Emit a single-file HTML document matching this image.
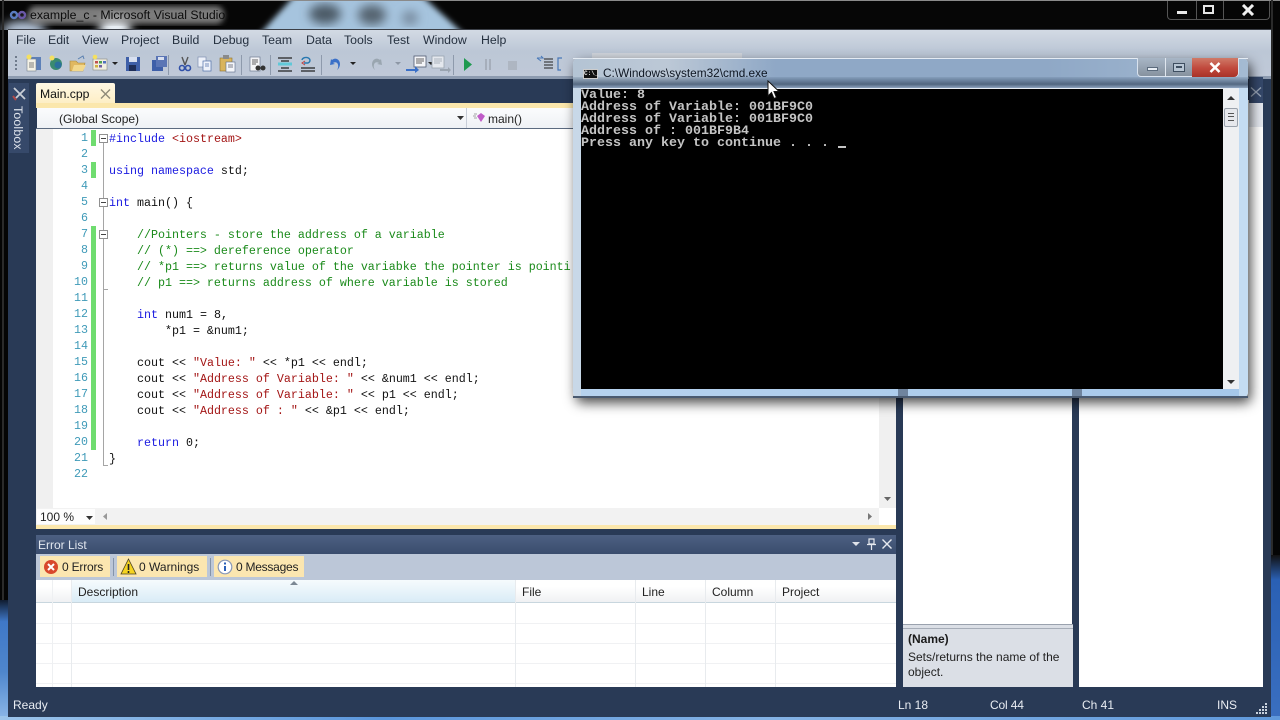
<!DOCTYPE html>
<html><head><meta charset="utf-8"><style>
html,body{margin:0;padding:0;background:#000;}
#r{position:relative;width:1280px;height:720px;overflow:hidden;background:#050505;font-family:"Liberation Sans",sans-serif;font-size:12px;color:#1a1a1a;}
#r div,#r span.a,#r svg{position:absolute;}
.t{position:absolute;white-space:pre;}
.c{position:absolute;left:109px;white-space:pre;font-family:"Liberation Mono",monospace;font-size:11.67px;line-height:16px;height:16px;color:#111;}
.n{position:absolute;width:30px;left:58px;text-align:right;font-family:"Liberation Mono",monospace;font-size:11.67px;line-height:16px;color:#3f9ab8;}
.k{color:#1a1ae0}.s{color:#a31515}.g{color:#1a8a1a}
.m{position:absolute;white-space:pre;top:33px;font-size:12.3px;color:#25303f;}
.h{position:absolute;white-space:pre;top:585px;font-size:12px;color:#222;}
.cm{position:absolute;left:581px;white-space:pre;font-family:"Liberation Mono",monospace;font-weight:bold;font-size:13.33px;line-height:12px;height:12px;color:#c4c4c4;}
.w{position:absolute;white-space:pre;top:698px;font-size:12px;color:#e8ecf2;}
</style></head><body><div id="r">

<!-- desktop / title bar -->
<div style="left:0;top:0;width:1280px;height:30px;background:#060606"></div>
<svg style="left:0;top:0" width="520" height="30" viewBox="0 0 520 30">
<defs><filter id="b1"><feGaussianBlur stdDeviation="5"/></filter><filter id="b2"><feGaussianBlur stdDeviation="3"/></filter><filter id="b3"><feGaussianBlur stdDeviation="5"/></filter></defs>
<g filter="url(#b1)"><ellipse cx="24" cy="30" rx="22" ry="9" fill="#b8c8dc"/><ellipse cx="115" cy="28" rx="16" ry="14" fill="#e8eef4"/></g>
<path d="M258 36L296 -6H420L466 36z" fill="#a6c4de" filter="url(#b2)"/>
<g filter="url(#b3)"><ellipse cx="325" cy="14" rx="16" ry="10" fill="#4c5a66"/><ellipse cx="372" cy="15" rx="14" ry="10" fill="#54646f"/><ellipse cx="410" cy="18" rx="8" ry="7" fill="#76899c"/></g>
<rect x="28" y="6" width="196" height="18" rx="8" fill="#9a9a9a" opacity=".8" filter="url(#b2)"/>
</svg>
<div style="left:0;top:0;width:1280px;height:1px;background:#8a8a8a"></div>
<div style="left:1271px;top:0;width:2px;height:720px;background:#2b2b2b"></div>
<div style="left:2px;top:0;width:2px;height:720px;background:#2b2b2b"></div>
<!-- blue frame glow bottom -->
<div style="left:0;top:600px;width:8px;height:120px;background:linear-gradient(#101c30,#3f78c8 18%,#4f86cc 60%,#8db8e8)"></div>
<div style="left:1271px;top:555px;width:9px;height:165px;background:linear-gradient(#111,#2a60b4 15%,#3a6fc0)"></div>
<div style="left:0;top:716px;width:1280px;height:4px;background:linear-gradient(90deg,#9cc4ea,#5a96dc 30%,#84b2e4 60%,#5f99dc)"></div>

<svg style="left:9px;top:9px" width="18" height="12" viewBox="0 0 18 12"><circle cx="5" cy="6" r="3" fill="none" stroke="#5a7cc0" stroke-width="2.400"/><circle cx="13" cy="6" r="3" fill="none" stroke="#6a58a8" stroke-width="2.400"/></svg>
<span class="t" style="left:30px;top:8px;font-size:12.3px;color:#0c0c0c">example_c - Microsoft Visual Studio</span>

<!-- top window buttons -->
<div style="left:1167px;top:1px;width:103px;height:19px;border:1px solid #555;border-top:0;border-radius:0 0 4px 4px;box-sizing:border-box"></div>
<div style="left:1196px;top:1px;width:1px;height:19px;background:#555"></div>
<div style="left:1223px;top:1px;width:1px;height:19px;background:#555"></div>
<div style="left:1177px;top:11px;width:10px;height:3px;background:#e8e8e8"></div>
<div style="left:1203px;top:5px;width:11px;height:9px;border:2px solid #e6e6e6;box-sizing:border-box"></div>
<svg style="left:1241px;top:4px" width="14" height="12" viewBox="0 0 14 12"><path d="M2 1L12 11M12 1L2 11" stroke="#f0f0f0" stroke-width="3"/></svg>

<!-- VS body -->
<div style="left:8px;top:29px;width:1263px;height:688px;background:#293a56"></div>
<div style="left:8px;top:30px;width:1263px;height:47px;background:linear-gradient(#d3dae4,#bcc7d6 45%,#c0c9d8 100%)"></div>
<div style="left:8px;top:29px;width:1263px;height:1px;background:#3b3f47"></div>
<div style="left:8px;top:76px;width:1263px;height:3px;background:#8d9bb0"></div>

<!-- Menu -->
<span class="m" style="left:16px">File</span>
<span class="m" style="left:48px">Edit</span>
<span class="m" style="left:82px">View</span>
<span class="m" style="left:121px">Project</span>
<span class="m" style="left:172px">Build</span>
<span class="m" style="left:213px">Debug</span>
<span class="m" style="left:262px">Team</span>
<span class="m" style="left:306px">Data</span>
<span class="m" style="left:344px">Tools</span>
<span class="m" style="left:387px">Test</span>
<span class="m" style="left:423px">Window</span>
<span class="m" style="left:481px">Help</span>

<!-- Toolbar icons -->
<svg style="left:10px;top:50px" width="560" height="28" viewBox="0 0 560 28">
<g fill="#6f7b8c"><rect x="5" y="6" width="2" height="2"/><rect x="5" y="10" width="2" height="2"/><rect x="5" y="14" width="2" height="2"/><rect x="5" y="18" width="2" height="2"/></g>
<rect x="20" y="7" width="11" height="13" fill="#5d80b8"/><rect x="17" y="9" width="9" height="12" fill="#f4f2e6" stroke="#77828f" stroke-width=".6"/><path d="M19 13h5M19 15h5M19 17h5" stroke="#555" stroke-width=".8"/><circle cx="19" cy="7" r="2.500" fill="#f4e060"/>
<circle cx="46" cy="14" r="6" fill="#3a8a70"/><circle cx="48" cy="15" r="3.500" fill="#2a6f9c"/><circle cx="42" cy="8" r="2.500" fill="#f4e060"/>
<path d="M60 21V11h6l2 2h7l-2 8z" fill="#e0b860" stroke="#a98a3c" stroke-width=".6"/><path d="M62 21l2-6h12l-3 6z" fill="#f2d88c"/><path d="M68 9l5-3 1 3" stroke="#5a80b0" fill="none"/>
<rect x="83" y="9" width="14" height="11" fill="#f0eee0" stroke="#8a8a80" stroke-width=".6"/><rect x="85" y="11" width="3" height="2.500" fill="#c05050"/><rect x="89" y="11" width="3" height="2.500" fill="#50a050"/><rect x="93" y="11" width="3" height="2.500" fill="#5070c0"/><rect x="85" y="15" width="3" height="2.500" fill="#d0b040"/><rect x="89" y="15" width="3" height="2.500" fill="#7060a0"/><circle cx="85" cy="7" r="2.300" fill="#f4e060"/>
<path d="M102 12h6l-3 3z" fill="#222"/>
<rect x="116" y="7" width="14" height="14" fill="#3e5fa8"/><rect x="119" y="7" width="8" height="5" fill="#d8e0f0"/><rect x="119" y="15" width="7" height="6" fill="#1e2e58"/>
<rect x="142" y="10" width="11" height="11" fill="#3e5fa8"/><rect x="146" y="6" width="11" height="11" fill="#5a75b5"/><rect x="148" y="7" width="6" height="3" fill="#d8e0f0"/>
<rect x="158" y="5" width="1" height="20" fill="#8e9aac"/>
<path d="M172 7l3 8M178 7l-3 8" stroke="#555" stroke-width="1.400"/><circle cx="172" cy="18" r="2.500" fill="none" stroke="#3050a8" stroke-width="1.600"/><circle cx="178" cy="18" r="2.500" fill="none" stroke="#3050a8" stroke-width="1.600"/>
<rect x="188" y="7" width="8" height="10" fill="#eef2fa" stroke="#7f8fb0" stroke-width=".7"/><rect x="193" y="11" width="8" height="10" fill="#eef2fa" stroke="#4f6fa8" stroke-width=".7"/><path d="M195 14h4M195 16h4" stroke="#4f6fa8" stroke-width=".7"/>
<rect x="210" y="8" width="12" height="13" fill="#d9b45c" stroke="#8c7030" stroke-width=".6"/><rect x="213" y="5" width="6" height="4" fill="#8a8a8a"/><rect x="216" y="12" width="9" height="10" fill="#f4f6fa" stroke="#5a6a88" stroke-width=".6"/><path d="M218 15h5M218 17h5" stroke="#556" stroke-width=".7"/>
<rect x="231" y="5" width="1" height="20" fill="#8e9aac"/>
<rect x="240" y="7" width="10" height="14" fill="#f4f5f8" stroke="#6e7a90" stroke-width=".7"/><path d="M242 10h6M242 12h6M242 14h4" stroke="#333" stroke-width=".7"/><circle cx="248" cy="18" r="2.500" fill="#333"/><circle cx="253" cy="18" r="2.500" fill="#333"/>
<rect x="260" y="5" width="1" height="20" fill="#8e9aac"/>
<path d="M268 8h14M271 11h8" stroke="#222" stroke-width="1.200"/><rect x="268" y="12.500" width="14" height="3" fill="#60c8d8"/><path d="M271 18h8M268 21h14" stroke="#222" stroke-width="1.200"/>
<path d="M292 10a4 3 0 1 1 6 3h-4" fill="none" stroke="#2878b0" stroke-width="1.400"/><path d="M295 15l-3-2 3-2" fill="none" stroke="#c04040" stroke-width="1"/><path d="M291 18h14M291 21h14" stroke="#222" stroke-width="1.300"/>
<rect x="311" y="5" width="1" height="20" fill="#8e9aac"/>
<path d="M321 9l-1 6 5-1-2-1c3-2 6 0 5 5l-1 2c4-3 4-9 0-11-2-1-4 0-5 1z" fill="#3a70c8"/>
<path d="M340 12h6l-3 3z" fill="#222"/>
<path d="M371 9l1 6-5-1 2-1c-3-2-6 0-5 5l1 2c-4-3-4-9 0-11 2-1 4 0 5 1z" fill="#9aa6b0"/>
<path d="M385 12h6l-3 3z" fill="#8d97a5"/>
<rect x="404" y="6" width="12" height="11" fill="#f4f5f8" stroke="#505a70" stroke-width=".8"/><path d="M406 9h8M406 11h8M406 13h6" stroke="#333" stroke-width=".8"/><path d="M396 19h9v-3l4 4-4 3v-2h-9z" fill="#3a70c8"/>
<path d="M418 12h6l-3 3z" fill="#222"/>
<rect x="422" y="6" width="12" height="12" fill="#e4e8ee" stroke="#9aa4b0" stroke-width=".8"/><path d="M424 9h8M424 11h8M424 13h6" stroke="#9aa4b0" stroke-width=".8"/><path d="M430 19h8v-2l3 3-3 3v-2h-8z" fill="#9aa4b0"/>
<rect x="443" y="5" width="1" height="20" fill="#8e9aac"/>
<path d="M454 8l8 6.500-8 6.500z" fill="#1f9a50"/>
<path d="M476 9v11M480 9v11" stroke="#a6aebb" stroke-width="2"/>
<rect x="498" y="11" width="9" height="9" fill="#aeb6c2"/>
<path d="M527 8h6l-2-2M527 8l4 3" fill="none" stroke="#4878b8" stroke-width="1"/>
<path d="M534 9h9M534 12h9M534 15h9M534 18h9" stroke="#222" stroke-width="1"/>
<path d="M552 8h-4v12h3" fill="none" stroke="#4878b8" stroke-width="1.200"/>
</svg>
<div style="left:592px;top:53px;width:150px;height:5px;background:#d0d5dc"></div>

<!-- toolbox tab -->
<div style="left:9px;top:83px;width:20px;height:70px;background:#36496a"></div>
<svg style="left:12px;top:86px" width="15" height="16" viewBox="0 0 15 16"><path d="M2 2l11 11M13 3l-9 9" stroke="#c9ced6" stroke-width="1.800"/><path d="M1 10l3 4" stroke="#b04848" stroke-width="2"/></svg>
<span class="t" style="left:10px;top:106px;font-size:12.300px;color:#dfe4ec;transform-origin:0 0;transform:translate(15px,0) rotate(90deg);letter-spacing:.2px">Toolbox</span>

<!-- doc tab -->
<div style="left:36px;top:83px;width:79px;height:21px;background:linear-gradient(#fff8e4,#fdeec4);border-radius:2px 2px 0 0"></div>
<span class="t" style="left:40px;top:87px;font-size:12.200px;color:#111">Main.cpp</span>
<svg style="left:100px;top:89px" width="11" height="10" viewBox="0 0 11 10"><path d="M1 .5l9 9M10 .5l-9 9" stroke="#8f8a78" stroke-width="1.400"/></svg>
<div style="left:36px;top:103px;width:860px;height:5px;background:#fbe7ac"></div>

<!-- scope bar -->
<div style="left:37px;top:108px;width:859px;height:20px;background:linear-gradient(#fbfcfd,#eef1f5)"></div>
<span class="t" style="left:59px;top:112px;font-size:12px;color:#222">(Global Scope)</span>
<svg style="left:457px;top:116px" width="7" height="5"><path d="M0 0h7l-3.500 4z" fill="#333"/></svg>
<div style="left:466px;top:108px;width:1px;height:20px;background:#c8ced8"></div>
<svg style="left:473px;top:112px" width="13" height="11" viewBox="0 0 13 11"><path d="M1 2h3M0 4h3M1 6h3" stroke="#888" stroke-width=".7"/><path d="M4 4l4-3 4 3-4 6z" fill="#c05cc8"/></svg>
<span class="t" style="left:488px;top:112px;font-size:12px;color:#222">main()</span>
<div style="left:36px;top:128px;width:860px;height:1px;background:#5b6a80"></div>

<!-- editor -->
<div style="left:36px;top:129px;width:860px;height:396px;background:#fff"></div>
<div style="left:36px;top:129px;width:17px;height:379px;background:#f0f0f0"></div>
<div style="left:91px;top:130px;width:5px;height:16px;background:#6fdc6f"></div>
<div style="left:91px;top:162px;width:5px;height:16px;background:#6fdc6f"></div>
<div style="left:91px;top:226px;width:5px;height:224px;background:#6fdc6f"></div>
<div style="left:103px;top:143px;width:1px;height:322px;background:#a5a5a5"></div>
<div style="left:103px;top:465px;width:5px;height:1px;background:#a5a5a5"></div>
<div style="left:103px;top:289px;width:5px;height:1px;background:#a5a5a5"></div>
<div style="left:99px;top:134px;width:9px;height:9px;background:#fff;border:1px solid #909090;box-sizing:border-box"></div><div style="left:101px;top:138px;width:5px;height:1px;background:#444"></div>
<div style="left:99px;top:198px;width:9px;height:9px;background:#fff;border:1px solid #909090;box-sizing:border-box"></div><div style="left:101px;top:202px;width:5px;height:1px;background:#444"></div>
<div style="left:99px;top:230px;width:9px;height:9px;background:#fff;border:1px solid #909090;box-sizing:border-box"></div><div style="left:101px;top:234px;width:5px;height:1px;background:#444"></div>

<span class="n" style="top:130px">1</span><span class="n" style="top:146px">2</span><span class="n" style="top:162px">3</span><span class="n" style="top:178px">4</span><span class="n" style="top:194px">5</span><span class="n" style="top:210px">6</span><span class="n" style="top:226px">7</span><span class="n" style="top:242px">8</span><span class="n" style="top:258px">9</span><span class="n" style="top:274px">10</span><span class="n" style="top:290px">11</span><span class="n" style="top:306px">12</span><span class="n" style="top:322px">13</span><span class="n" style="top:338px">14</span><span class="n" style="top:354px">15</span><span class="n" style="top:370px">16</span><span class="n" style="top:386px">17</span><span class="n" style="top:402px">18</span><span class="n" style="top:418px">19</span><span class="n" style="top:434px">20</span><span class="n" style="top:450px">21</span><span class="n" style="top:466px">22</span>

<span class="c" style="top:131px"><span class="k">#include</span> <span class="s">&lt;iostream&gt;</span></span>
<span class="c" style="top:163px"><span class="k">using namespace</span> std;</span>
<span class="c" style="top:195px"><span class="k">int</span> main() {</span>
<span class="c g" style="top:227px">    //Pointers - store the address of a variable</span>
<span class="c g" style="top:243px">    // (*) ==&gt; dereference operator</span>
<span class="c g" style="top:259px">    // *p1 ==&gt; returns value of the variabke the pointer is pointi</span>
<span class="c g" style="top:275px">    // p1 ==&gt; returns address of where variable is stored</span>
<span class="c" style="top:307px">    <span class="k">int</span> num1 = 8,</span>
<span class="c" style="top:323px">        *p1 = &amp;num1;</span>
<span class="c" style="top:355px">    cout &lt;&lt; <span class="s">"Value: "</span> &lt;&lt; *p1 &lt;&lt; endl;</span>
<span class="c" style="top:371px">    cout &lt;&lt; <span class="s">"Address of Variable: "</span> &lt;&lt; &amp;num1 &lt;&lt; endl;</span>
<span class="c" style="top:387px">    cout &lt;&lt; <span class="s">"Address of Variable: "</span> &lt;&lt; p1 &lt;&lt; endl;</span>
<span class="c" style="top:403px">    cout &lt;&lt; <span class="s">"Address of : "</span> &lt;&lt; &amp;p1 &lt;&lt; endl;</span>
<span class="c" style="top:435px">    <span class="k">return</span> 0;</span>
<span class="c" style="top:451px">}</span>

<!-- editor scrollbars -->
<div style="left:879px;top:129px;width:17px;height:379px;background:#f0f0f0"></div>
<svg style="left:884px;top:497px" width="7" height="5"><path d="M0 0h7l-3.500 4z" fill="#666"/></svg>
<div style="left:36px;top:508px;width:843px;height:17px;background:#f2f2f2"></div>
<div style="left:37px;top:509px;width:58px;height:15px;background:#fdfdfd"></div>
<span class="t" style="left:40px;top:510px;font-size:12px;color:#222">100 %</span>
<svg style="left:86px;top:516px" width="7" height="5"><path d="M0 0h7l-3.500 4z" fill="#333"/></svg>
<svg style="left:102px;top:513px" width="5" height="7"><path d="M5 0v7L1 3.500z" fill="#999"/></svg>
<svg style="left:868px;top:513px" width="5" height="7"><path d="M0 0v7l4-3.500z" fill="#777"/></svg>
<div style="left:36px;top:525px;width:860px;height:4px;background:#fbe7ac"></div>

<!-- Error list -->
<div style="left:36px;top:535px;width:860px;height:19px;background:linear-gradient(#4d6082,#3a4c6d)"></div>
<span class="t" style="left:38px;top:538px;font-size:12px;color:#e2e7ef">Error List</span>
<svg style="left:852px;top:542px" width="9" height="5"><path d="M0 0h8l-4 4z" fill="#dfe3ea"/></svg>
<svg style="left:867px;top:538px" width="9" height="12" viewBox="0 0 9 12"><path d="M2 1h5v5H2zM0 6.500h9M4.500 7v5" fill="none" stroke="#e6e9ef" stroke-width="1.200"/></svg>
<svg style="left:882px;top:539px" width="10" height="10" viewBox="0 0 10 10"><path d="M.5.5l9 9M9.500.5l-9 9" stroke="#e6e9ef" stroke-width="1.400"/></svg>
<div style="left:36px;top:554px;width:860px;height:26px;background:#bcc7d8"></div>
<div style="left:40px;top:556px;width:70px;height:21px;background:#fbe6b0"></div>
<div style="left:117px;top:556px;width:90px;height:21px;background:#fbe6b0"></div>
<div style="left:214px;top:556px;width:90px;height:21px;background:#fbe6b0"></div>
<div style="left:113px;top:558px;width:1px;height:18px;background:#8594aa"></div>
<div style="left:210px;top:558px;width:1px;height:18px;background:#8594aa"></div>
<svg style="left:43px;top:559px" width="16" height="16" viewBox="0 0 16 16"><circle cx="8" cy="8" r="7" fill="#d8482c"/><path d="M5 5l6 6M11 5l-6 6" stroke="#fff" stroke-width="2"/></svg>
<svg style="left:120px;top:558px" width="17" height="17" viewBox="0 0 17 17"><path d="M8.500 1L16 16H1z" fill="#f5d320" stroke="#4a4020" stroke-width=".8"/><path d="M8.500 6v6M8.500 13v2" stroke="#222" stroke-width="1.600"/></svg>
<svg style="left:217px;top:559px" width="16" height="16" viewBox="0 0 16 16"><circle cx="8" cy="8" r="6.800" fill="#fff" stroke="#8898b8" stroke-width="1.200"/><path d="M8 7v5" stroke="#2a60b8" stroke-width="2"/><path d="M8 3.500v2" stroke="#2a60b8" stroke-width="2"/></svg>
<span class="t" style="left:62px;top:560px;font-size:12px;letter-spacing:-.2px;color:#222">0 Errors</span>
<span class="t" style="left:139px;top:560px;font-size:12px;color:#222">0 Warnings</span>
<span class="t" style="left:236px;top:560px;font-size:12px;letter-spacing:-.25px;color:#222">0 Messages</span>

<div style="left:36px;top:580px;width:860px;height:107px;background:#fff"></div>
<div style="left:36px;top:580px;width:860px;height:23px;background:linear-gradient(#fff 30%,#eff0f2)"></div>
<div style="left:72px;top:580px;width:443px;height:23px;background:linear-gradient(#f6fbfd,#d8ebf6)"></div>
<div style="left:36px;top:602px;width:860px;height:1px;background:#c8d6de"></div>
<div style="left:36px;top:623px;width:860px;height:1px;background:#f0f1f3"></div>
<div style="left:36px;top:643px;width:860px;height:1px;background:#f0f1f3"></div>
<div style="left:36px;top:663px;width:860px;height:1px;background:#f0f1f3"></div>
<div style="left:36px;top:683px;width:860px;height:1px;background:#f0f1f3"></div>
<div style="left:52px;top:580px;width:1px;height:107px;background:#eef0f2"></div>
<div style="left:71px;top:580px;width:1px;height:107px;background:#e8ebee"></div>
<div style="left:515px;top:580px;width:1px;height:107px;background:#e8ebee"></div>
<div style="left:635px;top:580px;width:1px;height:107px;background:#e8ebee"></div>
<div style="left:705px;top:580px;width:1px;height:107px;background:#e8ebee"></div>
<div style="left:775px;top:580px;width:1px;height:107px;background:#e8ebee"></div>
<svg style="left:290px;top:581px" width="8" height="5"><path d="M4 0l4 4H0z" fill="#7c8894"/></svg>
<span class="h" style="left:78px">Description</span>
<span class="h" style="left:522px">File</span>
<span class="h" style="left:642px">Line</span>
<span class="h" style="left:712px">Column</span>
<span class="h" style="left:782px">Project</span>

<!-- right panes -->
<div style="left:903px;top:100px;width:169px;height:587px;background:#fff"></div>
<div style="left:1079px;top:100px;width:184px;height:587px;background:#fff"></div>
<div style="left:903px;top:624px;width:170px;height:63px;background:#dbdfe6;border-top:1px solid #9aa2ae;box-sizing:border-box"></div>
<div style="left:903px;top:628px;width:170px;height:1px;background:#a6adb8"></div>
<span class="t" style="left:908px;top:632px;font-size:12px;font-weight:bold;color:#1a1a1a">(Name)</span>
<span class="t" style="left:908px;top:650px;font-size:12px;color:#222">Sets/returns the name of the</span>
<span class="t" style="left:908px;top:665px;font-size:12px;color:#222">object.</span>
<div style="left:1249px;top:77px;width:14px;height:26px;background:#35486a"></div>
<svg style="left:1250px;top:87px" width="12" height="11" viewBox="0 0 12 11"><path d="M1 .5l10 9M11 .5l-10 9" stroke="#9aa6b8" stroke-width="1.300"/></svg>
<div style="left:1249px;top:103px;width:14px;height:24px;background:#e4e8ef"></div>

<!-- status text -->
<span class="w" style="left:13px">Ready</span>
<span class="w" style="left:898px">Ln 18</span>
<span class="w" style="left:990px;letter-spacing:-.15px">Col 44</span>
<span class="w" style="left:1082px">Ch 41</span>
<span class="w" style="left:1217px">INS</span>
<svg style="left:1256px;top:703px" width="12" height="12"><g fill="#c9d2de"><rect x="9" y="0" width="2" height="2"/><rect x="6" y="3" width="2" height="2"/><rect x="9" y="3" width="2" height="2"/><rect x="3" y="6" width="2" height="2"/><rect x="6" y="6" width="2" height="2"/><rect x="9" y="6" width="2" height="2"/><rect x="0" y="9" width="2" height="2"/><rect x="3" y="9" width="2" height="2"/><rect x="6" y="9" width="2" height="2"/><rect x="9" y="9" width="2" height="2"/></g></svg>

<!-- CMD window -->
<div style="left:573px;top:58px;width:675px;height:340px;border-radius:6px;box-shadow:3px 5px 12px rgba(0,0,0,.7);background:linear-gradient(90deg,#c8d8e8,#aac8e8 50%,#c4dcf2)"></div>
<div style="left:573px;top:58px;width:675px;height:30px;border-radius:6px 6px 0 0;background:linear-gradient(90deg,#b4c4d4 0%,#bcc8d6 14%,#8fa8c6 30%,#8fa8c6 70%,#a4bad2 100%)"></div>
<div style="left:573px;top:77px;width:675px;height:11px;background:linear-gradient(rgba(90,115,145,.2),rgba(70,90,115,.85) 65%,#8fa5c0)"></div>
<div style="left:573px;top:58px;width:675px;height:1px;background:#e4ebf3"></div>
<div style="left:581px;top:88px;width:658px;height:1px;background:#e8eef5"></div>
<div style="left:581px;top:89px;width:642px;height:300px;background:#000"></div>
<div style="left:581px;top:389px;width:658px;height:9px;background:linear-gradient(90deg,#b6d2ee,#a6c8ea)"></div>
<div style="left:898px;top:389px;width:10px;height:9px;background:#6f849e"></div>
<div style="left:1072px;top:389px;width:10px;height:9px;background:#6f849e"></div>
<div style="left:573px;top:396px;width:675px;height:2px;background:#4a5a70"></div>
<div style="left:1223px;top:89px;width:16px;height:300px;background:#eef0f2"></div>
<svg style="left:1227px;top:96px" width="8" height="5"><path d="M4 0l4 4H0z" fill="#333"/></svg>
<svg style="left:1227px;top:380px" width="8" height="5"><path d="M0 0h8L4 4z" fill="#333"/></svg>
<div style="left:1224px;top:108px;width:14px;height:19px;background:#e6e8ec;border:1px solid #9aa2ac;box-sizing:border-box;border-radius:2px"></div>
<div style="left:1228px;top:113px;width:6px;height:8px;border-top:1px solid #555;border-bottom:1px solid #555;box-sizing:border-box"></div>
<div style="left:1228px;top:116px;width:6px;height:1px;background:#555"></div>

<div style="left:583px;top:69px;width:15px;height:10px;background:#111;border:1px solid #ccc;box-sizing:border-box"></div>
<span class="t" style="left:584px;top:70px;font-size:6px;line-height:8px;font-family:'Liberation Mono',monospace;color:#eee;font-weight:bold">C:\_</span>
<span class="t" style="left:603px;top:66px;font-size:11.800px;color:#0e1622">C:\Windows\system32\cmd.exe</span>

<div style="left:1137px;top:58px;width:102px;height:19px;border:1px solid #d8e2ee;border-top:0;border-radius:0 0 4px 4px;box-sizing:border-box;background:linear-gradient(#a8b6c6,#86929f)"></div>
<div style="left:1165px;top:58px;width:1px;height:19px;background:#dfe6ee"></div>
<div style="left:1192px;top:58px;width:46px;height:19px;background:linear-gradient(#cf7a68,#c0483c 55%,#a83228);border-radius:0 0 4px 0"></div>
<div style="left:1147px;top:67px;width:11px;height:4px;background:#e8eef5;border:1px solid #5a6a7c;box-sizing:border-box"></div>
<div style="left:1173px;top:63px;width:12px;height:9px;border:1px solid #3e4e60;box-sizing:border-box;background:#b8c6d4"></div>
<div style="left:1176px;top:66px;width:6px;height:2px;background:#3e4e60"></div>
<svg style="left:1209px;top:62px" width="12" height="11" viewBox="0 0 12 11"><path d="M1.500 1l9 9M10.500 1l-9 9" stroke="#fff" stroke-width="2.600"/></svg>

<span class="cm" style="top:90px">Value: 8</span>
<span class="cm" style="top:102px">Address of Variable: 001BF9C0</span>
<span class="cm" style="top:114px">Address of Variable: 001BF9C0</span>
<span class="cm" style="top:126px">Address of : 001BF9B4</span>
<span class="cm" style="top:138px">Press any key to continue . . . </span>
<div style="left:838px;top:146px;width:8px;height:2px;background:#c4c4c4"></div>

<!-- cursor -->
<svg style="left:767px;top:80px" width="13" height="20" viewBox="0 0 13 20"><path d="M1 1v15l3.500-3.500 2.500 6 2.500-1-2.500-6H12z" fill="#fff" stroke="#111" stroke-width="1"/></svg>

</div></body></html>
